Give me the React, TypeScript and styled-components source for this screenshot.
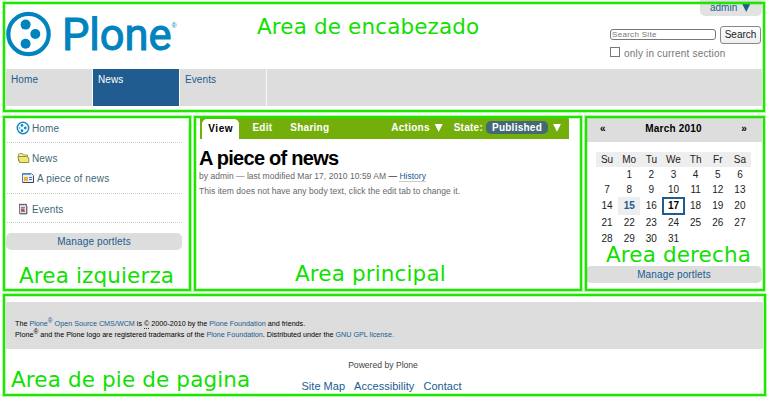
import React from "react";
import styled, { createGlobalStyle, css } from "styled-components";

const GREEN = "#1ee600";
const LINK = "#205c90";
const GREY = "#dddddd";

const GlobalStyle = createGlobalStyle`
  * { box-sizing: border-box; }
  body { margin: 0; background: #fff; }
`;

const Page = styled.div`
  width: 768px;
  height: 401px;
  overflow: hidden;
  background: #fff;
  color: #222;
  font: 10px/12px "Liberation Sans", Arial, sans-serif;
  padding: 2px 2px 0 3px;
  display: flex;
  flex-direction: column;
`;

const framed = css`
  position: relative;
  &::after {
    content: "";
    position: absolute;
    inset: 0;
    border: 2px solid ${GREEN};
    box-shadow: 0 0 0 1px #1ee60055, inset 0 0 0 1px #1ee60044;
    pointer-events: none;
  }
`;

const Caption = styled.div<{ $x: number; $y: number; $spacing?: number }>`
  position: absolute;
  z-index: 2;
  left: ${(p) => p.$x}px;
  top: ${(p) => p.$y}px;
  font: 21.5px/26px "DejaVu Sans", sans-serif;
  letter-spacing: ${(p) => p.$spacing ?? 0.13}px;
  color: #10e000;
  white-space: nowrap;
`;

const Header = styled.header`
  ${framed}
  width: 762px;
  height: 110px;
  padding: 0 3px;
`;

const HeaderTop = styled.div`
  height: 67px;
  display: flex;
  justify-content: space-between;
`;

const LogoSvg = styled.svg`
  display: block;
  width: 180px;
  height: 60px;
`;

const Tools = styled.div`
  width: 152px;
  display: flex;
  flex-direction: column;
`;

const UserMenu = styled.div`
  align-self: flex-end;
  width: 62px;
  height: 16px;
  margin-top: -2px;
  padding: 2px 0 0 10px;
  border-radius: 0 0 5px 5px;
  background: #e2e2e2;
  color: ${LINK};
  display: flex;
  gap: 5px;
`;

const Arrow = styled.span<{ $size?: number }>`
  width: ${(p) => p.$size ?? 8}px;
  height: ${(p) => p.$size ?? 8}px;
  background: currentColor;
  clip-path: polygon(0 0, 100% 0, 50% 100%);
  margin-top: 2px;
`;

const SearchRow = styled.div`
  display: flex;
  align-items: center;
  gap: 4px;
  margin-top: 9px;
  height: 19px;
`;

const SearchField = styled.div`
  width: 106px;
  height: 11px;
  border: 1px solid #777;
  border-radius: 3px;
  padding-left: 1px;
  font-size: 8px;
  line-height: 10px;
  letter-spacing: 0.3px;
  color: #777;
`;

const SearchButton = styled.button`
  width: 41px;
  height: 18px;
  padding: 0;
  border: 1px solid #888;
  border-radius: 3px;
  background: linear-gradient(#fff, #eee);
  font: 10px/14px "Liberation Sans", Arial, sans-serif;
  color: #222;
`;

const SectionOption = styled.label`
  display: flex;
  gap: 4px;
  margin-top: 2px;
  color: #777;
  letter-spacing: 0.18px;
  line-height: 15px;
`;

const Box = styled.span`
  width: 10px;
  height: 10px;
  margin-top: 1px;
  border: 1px solid #777;
`;

const Nav = styled.nav`
  height: 37px;
  background: ${GREY};
  display: flex;
`;

const NavItem = styled.a<{ $active?: boolean }>`
  width: 87px;
  padding: 5px;
  border-right: 1px solid #f8f8f8;
  letter-spacing: 0.1px;
  color: ${(p) => (p.$active ? "#fff" : LINK)};
  background: ${(p) => (p.$active ? LINK : GREY)};
`;

const Columns = styled.div`
  display: grid;
  grid-template-columns: 188px 388px 180px;
  column-gap: 3px;
  height: 175px;
  margin-top: 4px;
`;

const LeftColumn = styled.aside`
  ${framed}
  padding: 5px 9px 0 4px;
`;

const NavEntry = styled.div<{ $height: number; $indent?: number; $line?: boolean }>`
  height: ${(p) => p.$height}px;
  padding-left: ${(p) => p.$indent ?? 9}px;
  display: flex;
  align-items: flex-start;
  gap: 2px;
  color: #436976;
  letter-spacing: 0.15px;
  line-height: 15px;
  border-bottom: ${(p) => (p.$line ? "1px dotted #ccc" : "0")};
`;

const ManagePortlets = styled.div<{ $top: number }>`
  height: 17px;
  margin: ${(p) => p.$top}px 0 0 -1px;
  border-radius: 5px;
  background: ${GREY};
  color: ${LINK};
  text-align: center;
  line-height: 17px;
  letter-spacing: 0.13px;
`;

const Main = styled.main`
  ${framed}
  padding: 1px 13px 0 5px;
`;

const ContentBar = styled.div`
  height: 22px;
  margin-left: 1px;
  background: #74ae0b;
  border-radius: 0 3px 0 0;
  color: #fff;
  font-weight: bold;
  letter-spacing: 0.25px;
  display: flex;
  align-items: center;
  padding: 0 8px 0 2px;
`;

const ViewTab = styled.span`
  align-self: flex-end;
  width: 40px;
  height: 20px;
  line-height: 20px;
  text-align: center;
  border-radius: 5px 5px 0 0;
  background: #fff;
  color: #000;
  letter-spacing: 0.6px;
`;

const BarItem = styled.span<{ $left: number }>`
  margin-left: ${(p) => p.$left}px;
  display: flex;
  gap: 5px;
`;

const StatePill = styled.span`
  height: 13px;
  width: 62px;
  margin: -0.5px 0 0 -2px;
  line-height: 13px;
  text-align: center;
  border-radius: 5px;
  background: #436976;
`;

const Title = styled.h1`
  margin: 7px 0 0;
  font-size: 20px;
  line-height: 24px;
  letter-spacing: -0.73px;
  color: #000;
`;

const Byline = styled.div`
  margin-top: 0;
  font-size: 8.5px;
  line-height: 12px;
  letter-spacing: 0.02px;
  color: #666;
  white-space: nowrap;
`;

const HistoryLink = styled.a`
  color: ${LINK};
  border-bottom: 1px solid #ccc;
`;

const BodyText = styled.p`
  margin: 3px 0 0;
  font-size: 8.5px;
  line-height: 12px;
  letter-spacing: 0.05px;
  color: #666;
  white-space: nowrap;
`;

const RightColumn = styled.aside`
  ${framed}
  padding: 2px 3px 0 2px;
`;

const MonthBar = styled.div`
  height: 24px;
  padding: 0 15px 0 13px;
  background: ${GREY};
  color: #000;
  font-weight: bold;
  line-height: 22px;
  letter-spacing: 0.2px;
  display: flex;
  justify-content: space-between;
`;

const Calendar = styled.div`
  display: grid;
  grid-template-columns: repeat(7, 22.15px);
  grid-template-rows: 15px 15px 15px 18px 16px 15px;
  width: 155px;
  margin: 10px 0 0 9px;
`;

const Day = styled.span<{ $kind?: "head" | "event" | "today" }>`
  display: flex;
  align-items: center;
  justify-content: center;
  ${(p) => p.$kind === "head" && "background: #eeeeee;"}
  ${(p) => p.$kind === "event" && `background: #eeeeee; color: ${LINK}; font-weight: bold;`}
  ${(p) => p.$kind === "today" && `border: 2px solid ${LINK}; color: #000; font-weight: bold;`}
`;

const Footer = styled.footer`
  ${framed}
  width: 763px;
  height: 102px;
  margin-top: 3px;
  padding: 8px 3px 0;
  text-align: center;
`;

const Colophon = styled.div`
  height: 47px;
  padding: 17px 9px 0;
  background: ${GREY};
  color: #000;
  font-size: 7.2px;
  line-height: 10.5px;
  text-align: left;
  white-space: nowrap;
  a { color: ${LINK}; }
  sup { font-size: 6.5px; line-height: 0; vertical-align: 3px; }
`;

const Copyright = styled.span`
  border-bottom: 1px dotted #333;
`;

const Powered = styled.div`
  margin: 10px 3px 0 0;
  font-size: 8.6px;
  line-height: 12px;
  color: #444;
`;

const SiteLinks = styled.div`
  margin: 8px 6px 0 0;
  display: flex;
  justify-content: center;
  gap: 9px;
  font-size: 11px;
  line-height: 14px;
  letter-spacing: 0.03px;
  color: ${LINK};
`;

function Logo() {
  return (
    <LogoSvg viewBox="6 2 180 60">
      <circle cx="28.5" cy="34" r="20.2" fill="none" stroke="#0083be" strokeWidth="4.2" />
      <circle cx="25.6" cy="24.6" r="5" fill="#0083be" />
      <circle cx="35.3" cy="34" r="5" fill="#0083be" />
      <circle cx="25.6" cy="43.7" r="5" fill="#0083be" />
      <text x="62" y="49.5" textLength="109.5" fontFamily="Roboto" fontSize="43.5" fontWeight="400" fill="#0083be" stroke="#0083be" strokeWidth="1">Plone</text>
      <text x="171.5" y="27.5" fontFamily="Liberation Sans" fontSize="7" fill="#0083be">®</text>
    </LogoSvg>
  );
}

const HomeIcon = () => (
  <svg width="14" height="14" viewBox="0 0 14 14">
    <circle cx="7" cy="7" r="5.7" fill="none" stroke="#1588c4" strokeWidth="1.5" />
    <circle cx="6" cy="4.4" r="1.4" fill="#1588c4" />
    <circle cx="9.3" cy="7" r="1.4" fill="#1588c4" />
    <circle cx="6" cy="9.7" r="1.4" fill="#1588c4" />
    <circle cx="3.7" cy="7" r=".8" fill="#1588c4" />
  </svg>
);

const FolderIcon = () => (
  <svg width="13" height="14" viewBox="0 0 13 14">
    <path d="M1.5 10V3.8Q1.5 2.5 2.8 2.5H5Q6 2.5 6.4 4H10.5V10Z" fill="#f4f0a0" stroke="#a49c50" />
    <path d="M2.5 11.5L.8 5.5H9.5L11.8 7V11.5Z" fill="#ede96a" stroke="#8c8640" strokeWidth=".9" />
  </svg>
);

const NewsIcon = () => (
  <svg width="13" height="14" viewBox="0 0 13 14">
    <path d="M.5 2.5H9.5L11.5 4.5V11.5H.5Z" fill="#e8f1fa" stroke="#5f7890" />
    <path d="M1 3H9" stroke="#4b89c5" strokeWidth="1.5" />
    <rect x="2" y="6" width="4" height="4" fill="#efb02d" />
    <path d="M7 6.5H10M7 8.5H10" stroke="#3979c4" />
    <path d="M1 11.5H11.5V5" stroke="#444" fill="none" />
  </svg>
);

const EventIcon = () => (
  <svg width="12" height="14" viewBox="0 0 12 14">
    <rect x="1.5" y="2.5" width="7" height="9" fill="#dce2f4" stroke="#777b88" />
    <path d="M1 2.5H9" stroke="#b43b31" strokeWidth="1.6" strokeDasharray="1.2 .8" />
    <path d="M3 5.5H7M3 9.5H7" stroke="#7286b4" />
    <path d="M3 9V6.5H6.5V9.5Z" fill="#c9504d" />
    <path d="M9 4V12H2" fill="none" stroke="#666" strokeWidth=".8" />
  </svg>
);

const WEEKDAYS = ["Su", "Mo", "Tu", "We", "Th", "Fr", "Sa"];
const DAYS = Array.from({ length: 31 }, (_, i) => i + 1);

export default function App() {
  return (
    <>
      <GlobalStyle />
      <Page>
        <Header>
          <HeaderTop>
            <Logo />
            <Tools>
              <UserMenu>admin <Arrow /></UserMenu>
              <SearchRow>
                <SearchField>Search Site</SearchField>
                <SearchButton>Search</SearchButton>
              </SearchRow>
              <SectionOption><Box />only in current section</SectionOption>
            </Tools>
          </HeaderTop>
          <Nav>
            <NavItem>Home</NavItem>
            <NavItem $active>News</NavItem>
            <NavItem>Events</NavItem>
          </Nav>
          <Caption $x={254} $y={12}>Area de encabezado</Caption>
        </Header>
        <Columns>
          <LeftColumn>
            <NavEntry $height={22} $line><HomeIcon />Home</NavEntry>
            <NavEntry $height={8} />
            <NavEntry $height={20} $indent={10}><FolderIcon />News</NavEntry>
            <NavEntry $height={23} $indent={15} $line><NewsIcon />A piece of news</NavEntry>
            <NavEntry $height={8} />
            <NavEntry $height={21} $indent={11} $line><EventIcon />Events</NavEntry>
            <ManagePortlets $top={10}>Manage portlets</ManagePortlets>
            <Caption $x={16} $y={147}>Area izquierza</Caption>
          </LeftColumn>
          <Main>
            <ContentBar>
              <ViewTab>View</ViewTab>
              <BarItem $left={13}>Edit</BarItem>
              <BarItem $left={18}>Sharing</BarItem>
              <BarItem $left={62}>Actions <Arrow $size={8} /></BarItem>
              <BarItem $left={11}>State: <StatePill>Published</StatePill><Arrow $size={8} /></BarItem>
            </ContentBar>
            <Title>A piece of news</Title>
            <Byline>by admin — last modified Mar 17, 2010 10:59 AM <b>—</b> <HistoryLink>History</HistoryLink></Byline>
            <BodyText>This item does not have any body text, click the edit tab to change it.</BodyText>
            <Caption $x={101} $y={145}>Area principal</Caption>
          </Main>
          <RightColumn>
            <MonthBar><span>«</span><span>March 2010</span><span>»</span></MonthBar>
            <Calendar>
              {WEEKDAYS.map((d) => <Day key={d} $kind="head">{d}</Day>)}
              <Day />
              {DAYS.map((d) => (
                <Day key={d} $kind={d === 15 ? "event" : d === 17 ? "today" : undefined}>{d}</Day>
              ))}
            </Calendar>
            <ManagePortlets $top={20}>Manage portlets</ManagePortlets>
            <Caption $x={21} $y={126}>Area derecha</Caption>
          </RightColumn>
        </Columns>
        <Footer>
          <Colophon>
            <div>The <a>Plone<sup>®</sup> Open Source CMS/WCM</a> is <Copyright>©</Copyright> 2000-2010 by the <a>Plone Foundation</a> and friends.</div>
            <div>Plone<sup>®</sup> and the Plone logo are registered trademarks of the <a>Plone Foundation</a>. Distributed under the <a>GNU GPL license.</a></div>
          </Colophon>
          <Powered>Powered by Plone</Powered>
          <SiteLinks><a>Site Map</a><a>Accessibility</a><a>Contact</a></SiteLinks>
          <Caption $x={8} $y={73}>Area de pie de pagina</Caption>
        </Footer>
      </Page>
    </>
  );
}
